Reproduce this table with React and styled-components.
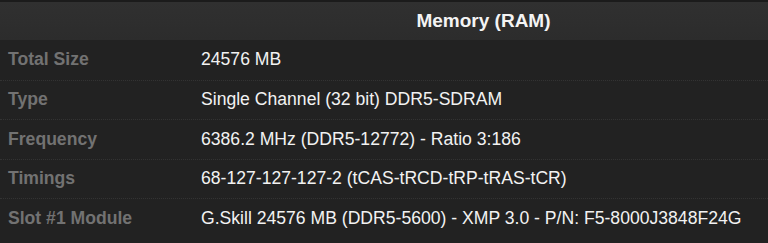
import React from "react";
import styled, { createGlobalStyle } from "styled-components";

const Global = createGlobalStyle`
  html, body { margin: 0; padding: 0; background: #222222; }
  body { font-family: "Liberation Sans", Arial, sans-serif; }
`;

const Table = styled.div`
  width: 768px;
  height: 243px;
  background: #222222;
  border-top: 2px solid #1b1b1b;
  box-sizing: border-box;
  display: flex;
  flex-direction: column;
`;

const Header = styled.div`
  display: grid;
  grid-template-columns: 193px 1fr;
  height: 38px;
  background: linear-gradient(#303030, #2c2c2c);
  align-items: center;
`;

const HeaderTitle = styled.div`
  grid-column: 2;
  text-align: center;
  padding-left: 6px;
  color: #f4f4f4;
  font-weight: bold;
  font-size: 19px;
`;

const Row = styled.div`
  display: grid;
  grid-template-columns: 193px 1fr;
  align-items: center;
  height: 39.5px;
  box-sizing: border-box;
  border-top: ${(p) => (p.$first ? "none" : "1px dotted #333333")};
`;

const Label = styled.div`
  padding-left: 8px;
  color: #727272;
  font-weight: bold;
  font-size: 17.6px;
`;

const Value = styled.div`
  padding-left: 8px;
  color: #f2f2f2;
  font-size: 17.6px;
  white-space: nowrap;
`;

const rows = [
  ["Total Size", "24576 MB"],
  ["Type", "Single Channel (32 bit) DDR5-SDRAM"],
  ["Frequency", "6386.2 MHz (DDR5-12772) - Ratio 3:186"],
  ["Timings", "68-127-127-127-2 (tCAS-tRCD-tRP-tRAS-tCR)"],
  ["Slot #1 Module", "G.Skill 24576 MB (DDR5-5600) - XMP 3.0 - P/N: F5-8000J3848F24G"],
];

export default function App() {
  return (
    <>
      <Global />
      <Table>
        <Header>
          <HeaderTitle>Memory (RAM)</HeaderTitle>
        </Header>
        {rows.map(([k, v], i) => (
          <Row key={k} $first={i === 0}>
            <Label>{k}</Label>
            <Value>{v}</Value>
          </Row>
        ))}
      </Table>
    </>
  );
}
